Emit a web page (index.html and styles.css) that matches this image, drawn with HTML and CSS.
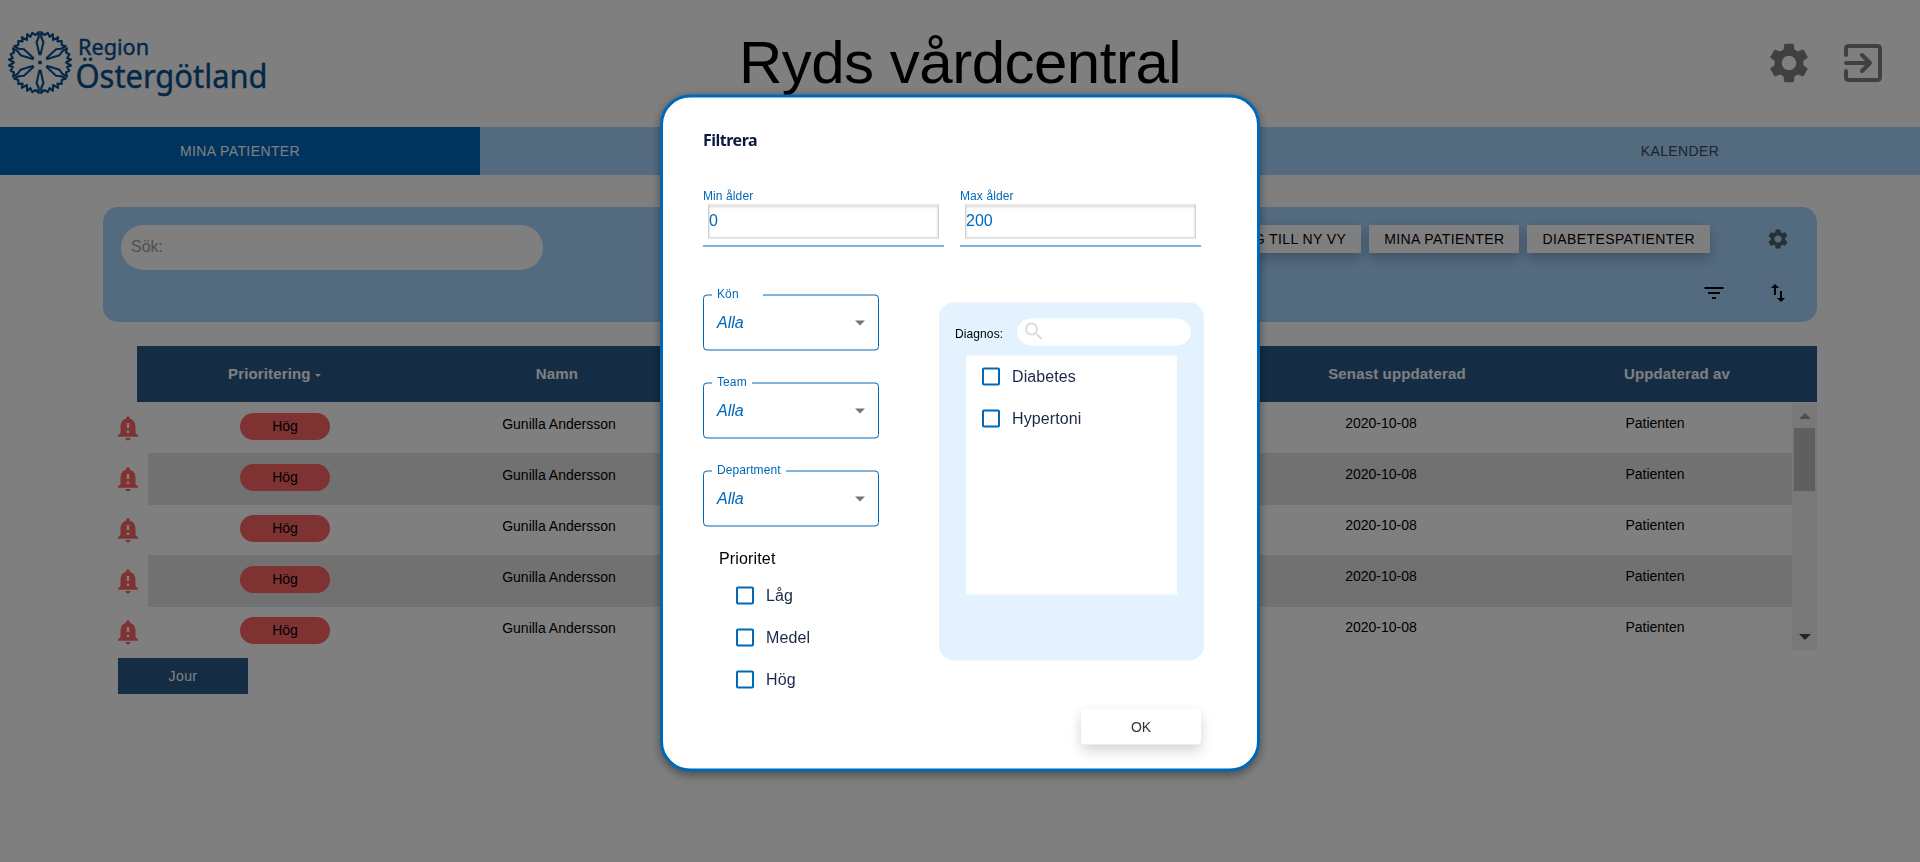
FILE: index.html
```html
<!DOCTYPE html>
<html lang="sv">
<head>
<meta charset="utf-8">
<title>Ryds vårdcentral</title>
<link rel="stylesheet" href="styles.css">
</head>
<body>
<svg class="defs" width="0" height="0">
  <defs>
    <symbol id="gear" viewBox="0 0 24 24"><path d="M19.14 12.94c.04-.3.06-.61.06-.94 0-.32-.02-.64-.07-.94l2.03-1.58c.18-.14.23-.41.12-.61l-1.92-3.32c-.12-.22-.37-.29-.59-.22l-2.39.96c-.5-.38-1.03-.7-1.62-.94l-.36-2.54c-.04-.24-.24-.41-.48-.41h-3.84c-.24 0-.43.17-.47.41l-.36 2.54c-.59.24-1.13.57-1.62.94l-2.39-.96c-.22-.08-.47 0-.59.22L2.74 8.87c-.12.21-.08.47.12.61l2.03 1.58c-.05.3-.09.63-.09.94s.02.64.07.94l-2.03 1.58c-.18.14-.23.41-.12.61l1.92 3.32c.12.22.37.29.59.22l2.39-.96c.5.38 1.03.7 1.62.94l.36 2.54c.05.24.24.41.48.41h3.84c.24 0 .44-.17.47-.41l.36-2.54c.59-.24 1.13-.56 1.62-.94l2.39.96c.22.08.47 0 .59-.22l1.92-3.32c.12-.22.07-.47-.12-.61l-2.01-1.58zM12 15.6c-1.98 0-3.6-1.62-3.6-3.6s1.62-3.6 3.6-3.6 3.6 1.62 3.6 3.6-1.62 3.6-3.6 3.6z"/></symbol>
    <symbol id="bell" viewBox="0 0 24 24"><path d="M18 16v-5c0-3.07-1.64-5.64-4.5-6.32V4c0-.83-.67-1.5-1.5-1.5s-1.5.67-1.5 1.5v.68C7.63 5.36 6 7.92 6 11v5l-2 2v1h16v-1l-2-2zm-5 0h-2v-2h2v2zm0-4h-2V8h2v4zm-1 10c1.1 0 2-.9 2-2h-4c0 1.1.89 2 2 2z"/></symbol>
    <path id="petal" d="M-3.300-6.500-7.300-19.500-11.500-22.500-14.200-27-10-26-8-29.500-4.500-27-3-31 0-26 3-31 4.500-27 8-29.500 10-26 14.200-27 11.500-22.500 7.300-19.500 3.300-6.500"/>
  </defs>
</svg>

<header class="top">
  <svg class="logo" width="270" height="80" viewBox="0 0 270 80">
    <g transform="translate(40 38.5)" class="flower">
      <use href="#petal" transform="rotate(30)"/><use href="#petal" transform="rotate(90)"/><use href="#petal" transform="rotate(150)"/>
      <use href="#petal" transform="rotate(210)"/><use href="#petal" transform="rotate(270)"/><use href="#petal" transform="rotate(330)"/>
      <circle r="2" class="dot"/>
    </g>
    <text x="78" y="30.500" class="logo-small" textLength="71" lengthAdjust="spacingAndGlyphs">Region</text>
    <text x="75.500" y="64" class="logo-big" textLength="192" lengthAdjust="spacingAndGlyphs">Östergötland</text>
  </svg>
  <h1>Ryds vårdcentral</h1>
  <div class="top-icons">
    <svg class="muted" width="48" height="48"><use href="#gear"/></svg>
    <svg class="exit" width="38" height="38" viewBox="0 0 38 38"><path d="M2 11V5q0-3 3-3h28q3 0 3 3v28q0 3-3 3H5q-3 0-3-3v-6M2 19h23M18 11l8 8-8 8"/></svg>
  </div>
</header>

<nav class="tabs">
  <a class="tab active">MINA PATIENTER</a><a class="tab"></a><a class="tab"></a><a class="tab">KALENDER</a>
</nav>

<main>
  <section class="toolbar">
    <div class="search">Sök:</div>
    <div class="tools">
      <div class="tool-row">
        <button>LÄGG TILL NY VY</button><button>MINA PATIENTER</button><button>DIABETESPATIENTER</button>
        <svg class="settings" width="24" height="24"><use href="#gear"/></svg>
      </div>
      <div class="tool-row icons">
        <svg width="24" height="24" viewBox="0 0 24 24"><path d="M10 18h4v-2h-4v2zM2.500 6v2h19V6h-19zM6 13h12v-2H6v2z"/></svg>
        <svg width="24" height="24" viewBox="0 0 24 24"><path d="M9 3 5 6.990h3V14h2V6.990h3L9 3zm7 14.010V10h-2v7.010h-3L15 21l4-3.990h-3z"/></svg>
      </div>
    </div>
  </section>

  <div class="thead">
    <div class="sorted">Prioritering <i class="sort"></i></div><div>Namn</div><div></div><div></div><div>Senast uppdaterad</div><div>Uppdaterad av</div>
  </div>
  <div class="tbody">
    <div class="rows">
      <div class="row"><svg class="bell" width="30" height="30"><use href="#bell"/></svg><div class="cells"><div><span class="pill">Hög</span></div><div class="name">Gunilla Andersson</div><div></div><div></div><div>2020-10-08</div><div>Patienten</div></div></div>
      <div class="row"><svg class="bell" width="30" height="30"><use href="#bell"/></svg><div class="cells"><div><span class="pill">Hög</span></div><div class="name">Gunilla Andersson</div><div></div><div></div><div>2020-10-08</div><div>Patienten</div></div></div>
      <div class="row"><svg class="bell" width="30" height="30"><use href="#bell"/></svg><div class="cells"><div><span class="pill">Hög</span></div><div class="name">Gunilla Andersson</div><div></div><div></div><div>2020-10-08</div><div>Patienten</div></div></div>
      <div class="row"><svg class="bell" width="30" height="30"><use href="#bell"/></svg><div class="cells"><div><span class="pill">Hög</span></div><div class="name">Gunilla Andersson</div><div></div><div></div><div>2020-10-08</div><div>Patienten</div></div></div>
      <div class="row"><svg class="bell" width="30" height="30"><use href="#bell"/></svg><div class="cells"><div><span class="pill">Hög</span></div><div class="name">Gunilla Andersson</div><div></div><div></div><div>2020-10-08</div><div>Patienten</div></div></div>
    </div>
    <div class="scrollbar"><i class="up"></i><i class="thumb"></i><i class="down"></i></div>
  </div>
  <div class="jour">Jour</div>
</main>

<div class="overlay"></div>

<div class="dialog" role="dialog">
  <h2>Filtrera</h2>
  <div class="ages">
    <div class="age"><span>Min ålder</span><div class="input">0</div></div>
    <div class="age"><span>Max ålder</span><div class="input">200</div></div>
  </div>
  <div class="columns">
    <div class="left">
      <fieldset class="select"><legend class="wide">Kön</legend><em>Alla</em><i></i></fieldset>
      <fieldset class="select"><legend>Team</legend><em>Alla</em><i></i></fieldset>
      <fieldset class="select"><legend>Department</legend><em>Alla</em><i></i></fieldset>
      <div class="prio">Prioritet</div>
      <div class="checks">
        <label><i class="box"></i>Låg</label>
        <label><i class="box"></i>Medel</label>
        <label><i class="box"></i>Hög</label>
      </div>
    </div>
    <div class="diagnosis">
      <div class="diag-head"><span>Diagnos:</span>
        <div class="diag-search"><svg width="24" height="24" viewBox="0 0 24 24"><path d="M15.500 14h-.79l-.28-.27C15.410 12.590 16 11.110 16 9.500 16 5.910 13.090 3 9.500 3S3 5.910 3 9.500 5.910 16 9.500 16c1.610 0 3.090-.59 4.230-1.570l.27.28v.79l5 4.990L20.490 19l-4.990-5zm-6 0C7.010 14 5 11.990 5 9.500S7.010 5 9.500 5 14 7.010 14 9.500 11.990 14 9.500 14z"/></svg></div>
      </div>
      <div class="diag-list">
        <label><i class="box"></i>Diabetes</label>
        <label><i class="box"></i>Hypertoni</label>
      </div>
    </div>
  </div>
  <button class="ok">OK</button>
</div>
</body>
</html>
```
FILE: styles.css
```css
* { box-sizing: border-box; }
body { margin: 0; height: 862px; overflow: hidden; background: #fff; font-family: "Liberation Sans", Arial, sans-serif; font-size: 14px; color: #000; }
.defs { position: absolute; }

.top { height: 127px; display: grid; grid-template-columns: 1fr auto 1fr; align-items: center; }
.logo { margin-top: 1px; overflow: visible; }
.flower { fill: none; stroke: #084e8e; stroke-width: 2.1; stroke-linejoin: round; }
.flower .dot { fill: #084e8e; stroke: none; }
.logo text { fill: #084e8e; font-family: "Noto Sans", sans-serif; stroke: #084e8e; stroke-width: 0.4; }
.logo .logo-small { font-size: 21px; }
.logo .logo-big { font-size: 32px; }
h1 { margin: -2px 0 0; font-size: 60px; font-weight: 400; letter-spacing: -0.5px; line-height: 72px; }
.top-icons { justify-self: end; display: flex; align-items: center; gap: 31px; padding-right: 38px; margin-top: -1px; }
.muted { fill: #808080; }
.exit { fill: none; stroke: #808080; stroke-width: 4; stroke-linecap: round; stroke-linejoin: round; }

.tabs { height: 48px; display: grid; grid-template-columns: repeat(4, 1fr); background: #a8d5ff; }
.tab { display: flex; align-items: center; justify-content: center; letter-spacing: 0.4px; padding-bottom: 1px; color: #3a4854; }
.tab.active { background: #06b; color: #fff; }

main { padding: 32px 103px 0; }
.toolbar { height: 115px; border-radius: 15px; background: #a8d5ff; padding: 18px; display: flex; justify-content: space-between; }
.search { width: 422px; height: 45px; border-radius: 22.5px; background: #fff; padding: 0 10px; line-height: 43px; font-size: 16px; color: #a0a0a0; }
.tool-row { display: flex; justify-content: flex-end; gap: 8px; padding-right: 9px; }
.tool-row button { height: 28px; border: 0; padding: 0 15px; background: #fff; font: 14px "Liberation Sans", Arial, sans-serif; letter-spacing: 0.4px; box-shadow: 0 8px 12px rgba(0,0,0,.13), 0 2px 12px rgba(0,0,0,.1); }
.settings { margin: 2px 0 0 48px; fill: #4d6072; }
.icons { gap: 40px; margin-top: 28px; padding-right: 9.5px; }

.thead { margin: 24px 0 0 34px; height: 56px; padding-bottom: 2px; display: grid; grid-template-columns: repeat(6, 1fr); align-items: center; text-align: center; background: #285b8b; color: #fff; font-size: 15px; font-weight: 700; letter-spacing: 0.15px; }
.sorted { padding-right: 5px; }
.sort { display: inline-block; border: 3px solid transparent; border-top-color: #fff; border-bottom: 0; vertical-align: 2px; }
.tbody { display: flex; margin-top: 1px; height: 247px; overflow: hidden; }
.rows { flex: 1; padding-left: 10px; }
.row { display: flex; height: 51px; }
.row:first-child { height: 50px; }
.row:first-child .cells { margin-top: -1px; }
.row:first-child .bell { margin-top: 10px; }
.bell { fill: #ff6464; margin: 11px 5px 0 0; flex: none; }
.cells { flex: 1; display: grid; grid-template-columns: repeat(6, 1fr); text-align: center; height: 52px; padding-top: 13px; line-height: 17px; }
.row:nth-child(even) .cells { background: #e3e3e3; }
.name { padding-top: 1px; }
.pill { display: block; width: 90px; height: 27px; margin: -2px auto 0; border-radius: 13.5px; background: #ff6464; line-height: 27px; }
.scrollbar { width: 25px; height: 247px; background: #f1f1f1; display: flex; flex-direction: column; align-items: center; padding: 10px 0; }
.up { border: 6px solid transparent; border-bottom-color: #9c9c9c; border-top: 0; }
.thumb { width: 21px; height: 63px; background: #bfbfbf; margin-top: 9px; }
.down { border: 6px solid transparent; border-top-color: #484848; border-bottom: 0; margin-top: auto; }
.jour { margin: 8px 0 0 15px; width: 130px; height: 36px; line-height: 36px; text-align: center; background: #285b8b; color: #fff; letter-spacing: 0.4px; }

.overlay { position: fixed; inset: 0; background: rgba(0,0,0,.5); }
.dialog { position: fixed; left: 660px; top: 94px; transform: translateY(.5px); width: 600px; height: 677px; border: 3px solid #0068b8; border-radius: 30px; background: #fff; padding: 30px 56px 0 40px; display: flex; flex-direction: column; box-shadow: 0 3px 10px rgba(0,0,0,.4); }
h2 { margin: 0; font: 700 16px/24px "Noto Sans", sans-serif; letter-spacing: -0.5px; color: #0a1a3f; }
.ages { display: flex; gap: 16px; margin-top: 36px; }
.age { width: 241px; height: 59px; border-bottom: 1px solid #0068b8; color: #0068b8; }
.age span { display: block; font-size: 12px; line-height: 16px; height: 17px; letter-spacing: 0.1px; }
.input { height: 34px; margin: 0 5px; border: 1px solid #d0d0d0; font-size: 16px; line-height: 29px; box-shadow: inset 0 1px 3px rgba(0,0,0,.2); }
.columns { display: flex; margin-top: 48px; }
.left { width: 176px; height: 394px; }
.select { position: relative; margin: -7px 0 32px; padding: 0 12px 0 9px; height: 63px; border: 1px solid #0068b8; border-radius: 4px; color: #0068b8; }
.select legend { margin-left: -1px; padding: 0 5px; font-size: 12px; line-height: 12px; height: 14px; letter-spacing: 0.1px; }
.select legend.wide { width: 51px; }
.select em { display: block; font-size: 16px; padding: 0 4px; line-height: 42px; }
.select i { border: 5px solid transparent; border-top-color: #757575; border-bottom: 0; position: absolute; right: 13px; top: 19px; }
.prio { font-size: 16px; line-height: 18px; padding-left: 16px; margin-top: -9px; letter-spacing: 0.15px; }
.checks { padding: 19px 0 0 33px; }
.dialog label { display: flex; align-items: center; height: 18px; margin-bottom: 24px; gap: 12px; font-size: 16px; color: #1c2848; letter-spacing: 0.1px; }
.box { width: 18px; height: 18px; border: 2px solid #0068b8; border-radius: 2px; }
.diagnosis { margin: 8px -3px 0 60px; width: 265px; height: 358px; flex: none; border-radius: 15px; background: #e3f2fe; padding: 16px 13px 0 16px; }
.diag-head { display: flex; justify-content: space-between; font-size: 12px; line-height: 31px; height: 27px; margin-bottom: 10px; letter-spacing: 0.1px; }
.diag-search { width: 174px; height: 27px; background: #fff; border-radius: 13.5px; padding: 1px 0 0 5px; }
.diag-search svg { display: block; fill: #ddd; }
.diag-list { margin-left: 11px; width: 211px; height: 239px; background: #fff; padding: 12px 16px; }
.ok { align-self: flex-end; margin-top: 20px; width: 120px; height: 36px; border: 0; border-radius: 4px; background: #fff; font: 14px "Liberation Sans", Arial, sans-serif; color: #333; box-shadow: 0 8px 14px rgba(0,0,0,.12), 0 2px 12px rgba(0,0,0,.06); }
```
